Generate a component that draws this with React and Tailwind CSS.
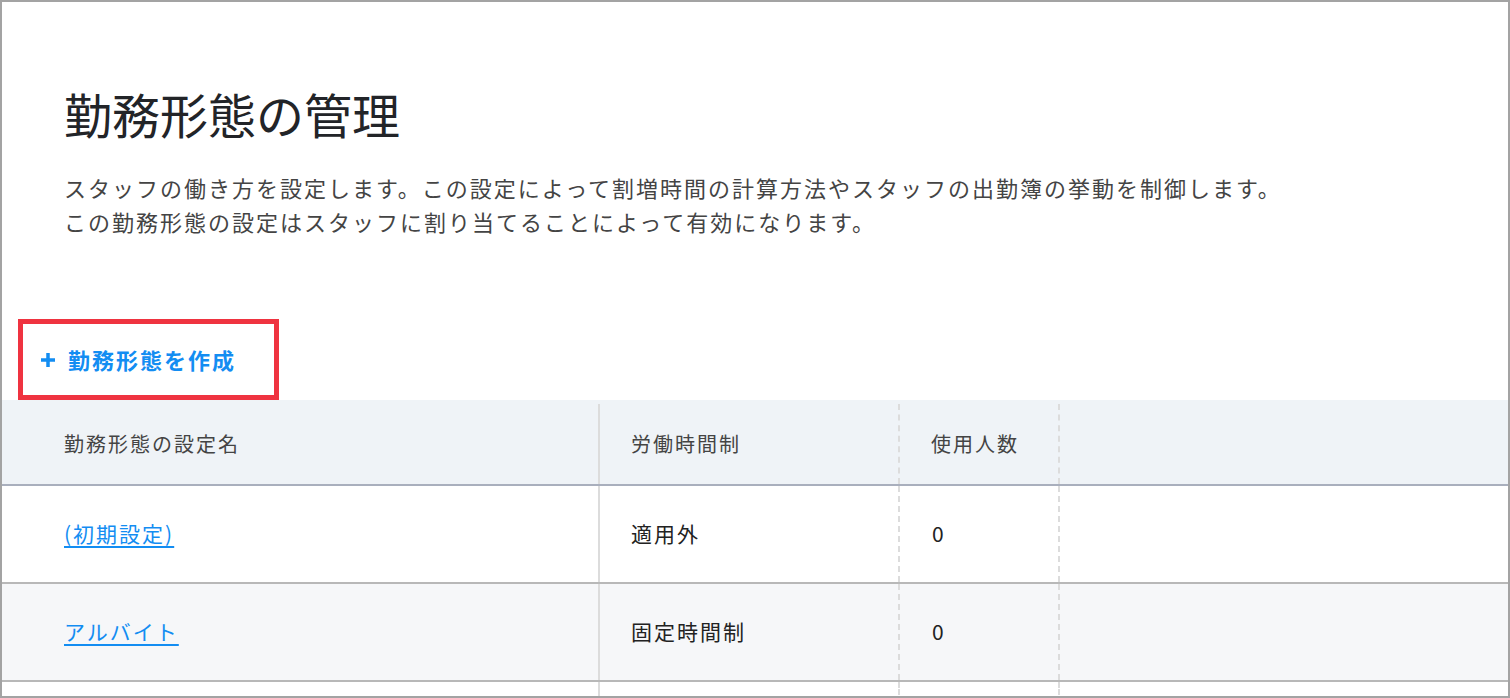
const jp = { fontFamily: '"Noto Sans CJK JP", "Noto Sans", sans-serif' }

const rows = [
  { name: '(初期設定)', system: '適用外', count: 0, bg: 'bg-white' },
  { name: 'アルバイト', system: '固定時間制', count: 0, bg: 'bg-[#f6f7f9]' },
]

export default function App() {
  return (
    <div style={jp} className="w-[1510px] h-[698px] border-2 border-[#a3a3a3] bg-white overflow-hidden">
      {/* Page header */}
      <div className="pl-[62px] pt-[76px]">
        <h1 className="text-[48px] leading-[70px] text-[#222428] font-normal">勤務形態の管理</h1>
        <div className="mt-[22px] text-[22px] leading-[34px] tracking-[2px] text-[#444]">
          <p>スタッフの働き方を設定します。この設定によって割増時間の計算方法やスタッフの出勤簿の挙動を制御します。</p>
          <p>この勤務形態の設定はスタッフに割り当てることによって有効になります。</p>
        </div>
      </div>

      {/* Create button */}
      <div className="mt-[81px] ml-[16px] w-[261px] h-[81px] border-[5px] border-[#ef3340] flex items-center pl-[17px]">
        <button className="flex items-center gap-[12px] text-[#138df2] font-bold text-[22px] tracking-[2px]">
          <svg width="16" height="16" viewBox="0 0 16 16" className="shrink-0">
            <path d="M8 1v14M1 8h14" stroke="currentColor" strokeWidth="3.5" />
          </svg>
          勤務形態を作成
        </button>
      </div>

      {/* Table */}
      <div>
        <div className="flex h-[86px] pt-[4px] bg-[#eff3f7] border-b-2 border-[#a9afbd] text-[20px] tracking-[2px] text-[#444]">
          <div className="w-[598px] border-r-2 border-[#dcdcdc] pl-[62px] flex items-center">勤務形態の設定名</div>
          <div className="w-[300px] border-r-2 border-dashed border-[#dcdcdc] pl-[31px] flex items-center">労働時間制</div>
          <div className="w-[160px] border-r-2 border-dashed border-[#dcdcdc] pl-[31px] flex items-center">使用人数</div>
          <div className="flex-1" />
        </div>
        {rows.map(row => (
          <div key={row.name} className={`flex h-[98px] border-b-2 border-[#b8b8b8] text-[21px] tracking-[2px] text-[#222] ${row.bg}`}>
            <div className="w-[598px] border-r-2 border-[#dcdcdc] pl-[62px] flex items-center">
              <a href="#" className="text-[#138df2] underline underline-offset-[4px] decoration-[1.5px]">{row.name}</a>
            </div>
            <div className="w-[300px] border-r-2 border-dashed border-[#dcdcdc] pl-[31px] flex items-center">{row.system}</div>
            <div className="w-[160px] border-r-2 border-dashed border-[#dcdcdc] pl-[32px] flex items-center">{row.count}</div>
            <div className="flex-1" />
          </div>
        ))}
        <div className="flex h-[20px]">
          <div className="w-[598px] border-r-2 border-[#dcdcdc]" />
          <div className="w-[300px] border-r-2 border-dashed border-[#dcdcdc]" />
          <div className="w-[160px] border-r-2 border-dashed border-[#dcdcdc]" />
          <div className="flex-1" />
        </div>
      </div>
    </div>
  )
}
